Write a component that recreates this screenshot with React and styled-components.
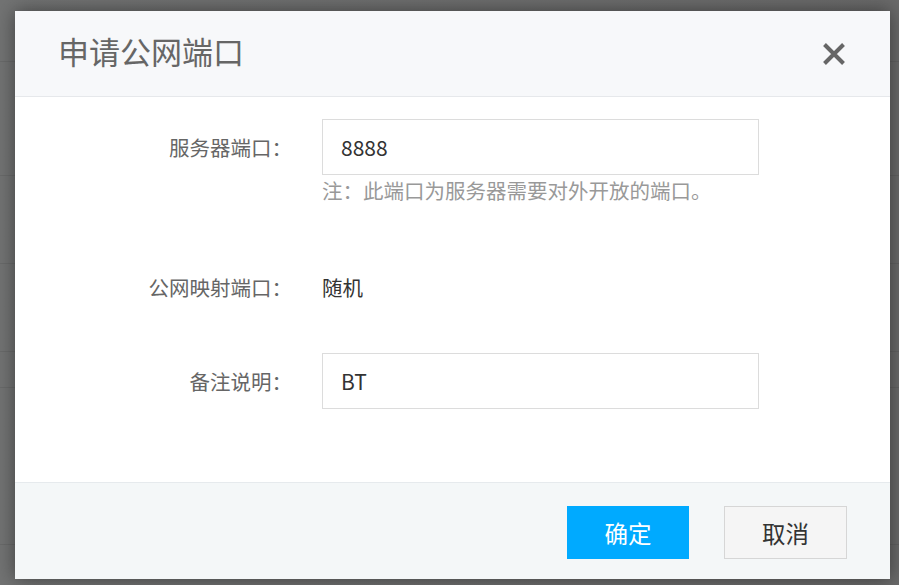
import React, { useState } from 'react'
import styled, { createGlobalStyle } from 'styled-components'

const GlobalStyle = createGlobalStyle`
   html, body {
      margin: 0;
      padding: 0;
      width: 899px;
      height: 585px;
      overflow: hidden;
      font-family: "Noto Sans CJK SC", "Noto Sans", sans-serif;
   }
   * {
      box-sizing: border-box;
   }
`

const fields = [
   { label: '服务器端口：', kind: 'input', value: '8888', hint: '注：此端口为服务器需要对外开放的端口。' },
   { label: '公网映射端口：', kind: 'text', value: '随机' },
   { label: '备注说明：', kind: 'input', value: 'BT' },
]

const App = () => {
   const [values, setValues] = useState(fields.map((f) => f.value))

   const handleChange = (index) => (e) => {
      const next = [...values]
      next[index] = e.target.value
      setValues(next)
   }

   return (
      <>
         <GlobalStyle />
         <Backdrop>
            <Dialog>
               <Header>
                  <Title>申请公网端口</Title>
                  <CloseButton aria-label="关闭">
                     <svg width="24" height="24" viewBox="0 0 24 24">
                        <path
                           d="M2.5 2.5 L21.5 21.5 M21.5 2.5 L2.5 21.5"
                           stroke="#666"
                           strokeWidth="4"
                           strokeLinecap="butt"
                        />
                     </svg>
                  </CloseButton>
               </Header>
               <Body>
                  {fields.map((field, index) => (
                     <Field key={field.label} index={index}>
                        <Row input={field.kind === 'input'}>
                           <Label>{field.label}</Label>
                           {field.kind === 'input' ? (
                              <Input value={values[index]} onChange={handleChange(index)} />
                           ) : (
                              <Value>{field.value}</Value>
                           )}
                        </Row>
                        {field.hint && <Hint>{field.hint}</Hint>}
                     </Field>
                  ))}
               </Body>
               <Footer>
                  <Button primary>确定</Button>
                  <Button>取消</Button>
               </Footer>
            </Dialog>
         </Backdrop>
      </>
   )
}

export default App

const Backdrop = styled.div`
   width: 899px;
   height: 585px;
   padding: 11px 9px 6px 15px;
   background-color: #6f7070;
   background-image:
      linear-gradient(to bottom, transparent 61px, rgba(0, 0, 0, 0.08) 61px, rgba(0, 0, 0, 0.08) 62px, transparent 62px),
      linear-gradient(to bottom, transparent 175px, rgba(0, 0, 0, 0.08) 175px, rgba(0, 0, 0, 0.08) 176px, transparent 176px),
      linear-gradient(to bottom, transparent 263px, rgba(0, 0, 0, 0.08) 263px, rgba(0, 0, 0, 0.08) 264px, transparent 264px),
      linear-gradient(to bottom, transparent 351px, rgba(0, 0, 0, 0.08) 351px, rgba(0, 0, 0, 0.08) 352px, transparent 352px),
      linear-gradient(to bottom, transparent 387px, rgba(0, 0, 0, 0.08) 387px, rgba(0, 0, 0, 0.08) 388px, transparent 388px),
      linear-gradient(to bottom, transparent 544px, rgba(0, 0, 0, 0.08) 544px, rgba(0, 0, 0, 0.08) 545px, transparent 545px),
      linear-gradient(to right, #727373, #6a6a6a);
`

const Dialog = styled.div`
   width: 875px;
   height: 568px;
   display: flex;
   flex-direction: column;
   background: #fff;
   box-shadow: 0 0 18px rgba(0, 0, 0, 0.45);
`

const Header = styled.div`
   height: 86px;
   flex-shrink: 0;
   display: flex;
   align-items: center;
   justify-content: space-between;
   padding: 0 44px 0 43px;
   background: #f7f8fa;
   border-bottom: 1px solid #e6e8eb;
`

const Title = styled.h2`
   margin: 0;
   margin-top: -5px;
   font-size: 31px;
   font-weight: 400;
   color: #666;
   line-height: 40px;
`

const CloseButton = styled.button`
   display: flex;
   align-items: center;
   justify-content: center;
   width: 24px;
   height: 24px;
   padding: 0;
   margin-top: 0;
   border: none;
   background: transparent;
   cursor: pointer;
`

const Body = styled.div`
   flex: 1;
   padding-top: 22px;
`

const Field = styled.div`
   margin-top: ${({ index }) => (index === 0 ? '0' : index === 1 ? '69px' : '52px')};
`

const Row = styled.div`
   display: grid;
   grid-template-columns: 277px 437px;
   column-gap: 30px;
   align-items: center;
   height: ${({ input }) => (input ? '56px' : '28px')};
`

const Label = styled.div`
   text-align: right;
   font-size: 20.5px;
   line-height: 28px;
   color: #666;
`

const Input = styled.input`
   width: 437px;
   height: 56px;
   padding: 0 18px;
   border: 1px solid #dcdcdc;
   outline: none;
   font-family: "Noto Sans CJK SC", "Noto Sans", sans-serif;
   font-size: 21px;
   color: #333;
   background: #fff;
`

const Value = styled.div`
   font-size: 20.5px;
   line-height: 28px;
   color: #333;
`

const Hint = styled.div`
   margin: 1px 0 0 307px;
   font-size: 20.5px;
   line-height: 28px;
   color: #999;
`

const Footer = styled.div`
   height: 97px;
   flex-shrink: 0;
   display: flex;
   align-items: flex-start;
   justify-content: flex-end;
   gap: 35px;
   padding: 23px 43px 0 0;
   background: #f4f7f8;
   border-top: 1px solid #e6eaed;
`

const Button = styled.button`
   width: ${({ primary }) => (primary ? '122px' : '123px')};
   height: 53px;
   border: 1px solid ${({ primary }) => (primary ? '#00aaff' : '#d6d6d6')};
   background: ${({ primary }) => (primary ? '#00aaff' : '#f5f5f5')};
   color: ${({ primary }) => (primary ? '#fff' : '#333')};
   font-family: "Noto Sans CJK SC", "Noto Sans", sans-serif;
   font-size: 23.5px;
   cursor: pointer;
`
